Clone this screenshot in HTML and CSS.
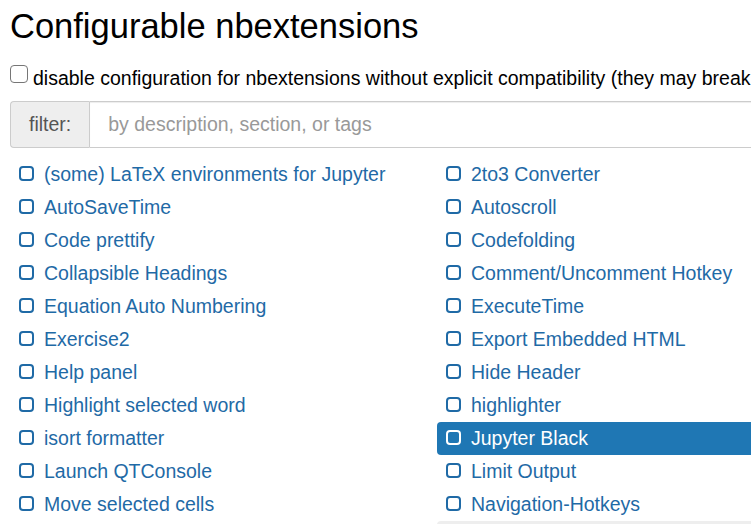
FILE: index.html
```html
<!DOCTYPE html>
<html lang="en">
<head>
<meta charset="utf-8">
<title>Configurable nbextensions</title>
<link rel="stylesheet" href="styles.css">
</head>
<body>
<div class="page">
  <h1 class="title">Configurable nbextensions</h1>
  <label class="compat"><input type="checkbox" class="compat-box">disable configuration for nbextensions without explicit compatibility (they may break</label>
  <div class="filter-group">
    <span class="filter-addon">filter:</span>
    <input class="filter-input" type="text" placeholder="by description, section, or tags">
  </div>
  <ul class="ext-list">
    <li class="ext"><span class="ext-box"></span><span class="ext-name">(some) LaTeX environments for Jupyter</span></li>
    <li class="ext"><span class="ext-box"></span><span class="ext-name">2to3 Converter</span></li>
    <li class="ext"><span class="ext-box"></span><span class="ext-name">AutoSaveTime</span></li>
    <li class="ext"><span class="ext-box"></span><span class="ext-name">Autoscroll</span></li>
    <li class="ext"><span class="ext-box"></span><span class="ext-name">Code prettify</span></li>
    <li class="ext"><span class="ext-box"></span><span class="ext-name">Codefolding</span></li>
    <li class="ext"><span class="ext-box"></span><span class="ext-name">Collapsible Headings</span></li>
    <li class="ext"><span class="ext-box"></span><span class="ext-name">Comment/Uncomment Hotkey</span></li>
    <li class="ext"><span class="ext-box"></span><span class="ext-name">Equation Auto Numbering</span></li>
    <li class="ext"><span class="ext-box"></span><span class="ext-name">ExecuteTime</span></li>
    <li class="ext"><span class="ext-box"></span><span class="ext-name">Exercise2</span></li>
    <li class="ext"><span class="ext-box"></span><span class="ext-name">Export Embedded HTML</span></li>
    <li class="ext"><span class="ext-box"></span><span class="ext-name">Help panel</span></li>
    <li class="ext"><span class="ext-box"></span><span class="ext-name">Hide Header</span></li>
    <li class="ext"><span class="ext-box"></span><span class="ext-name">Highlight selected word</span></li>
    <li class="ext"><span class="ext-box"></span><span class="ext-name">highlighter</span></li>
    <li class="ext"><span class="ext-box"></span><span class="ext-name">isort formatter</span></li>
    <li class="ext ext-active"><span class="ext-box"></span><span class="ext-name">Jupyter Black</span></li>
    <li class="ext"><span class="ext-box"></span><span class="ext-name">Launch QTConsole</span></li>
    <li class="ext"><span class="ext-box"></span><span class="ext-name">Limit Output</span></li>
    <li class="ext"><span class="ext-box"></span><span class="ext-name">Move selected cells</span></li>
    <li class="ext"><span class="ext-box"></span><span class="ext-name">Navigation-Hotkeys</span></li>
    <li class="ext ext-empty"></li>
    <li class="ext ext-empty ext-muted"></li>
  </ul>
</div>
</body>
</html>
```
FILE: styles.css
```css
html, body {
  margin: 0;
  padding: 0;
  overflow: hidden;
  background: #fff;
}
body {
  font-family: "Liberation Sans", Arial, sans-serif;
  color: #000;
}
.page {
  width: 854px;
  padding: 0 10px;
}
.title {
  margin: 8px 0 0;
  font-size: 34.5px;
  line-height: 1.1;
  font-weight: normal;
}
.compat {
  display: block;
  margin-top: 18px;
  font-size: 19.5px;
  line-height: 28px;
  white-space: nowrap;
}
.compat-box {
  -webkit-appearance: none;
  appearance: none;
  display: inline-block;
  width: 18px;
  height: 18px;
  margin: 0 5px 0 0;
  vertical-align: 2px;
  border: 1.5px solid #767676;
  border-radius: 4px;
  background: #fff;
  box-sizing: border-box;
}
.filter-group {
  display: flex;
  margin-top: 9px;
  height: 47px;
  font-size: 19.5px;
}
.filter-addon {
  display: flex;
  align-items: center;
  padding: 0 18px;
  background: #eee;
  color: #555;
  border: 1px solid #ccc;
  border-right: 0;
  border-radius: 4px 0 0 4px;
}
.filter-input {
  flex: 1;
  box-sizing: border-box;
  height: 47px;
  margin: 0;
  padding: 0 18px;
  font: inherit;
  color: #555;
  border: 1px solid #ccc;
  border-radius: 0 4px 4px 0;
  outline: none;
  box-shadow: inset 0 1px 1px rgba(0,0,0,0.075);
}
.filter-input::placeholder {
  color: #999;
}
.ext-list {
  list-style: none;
  margin: 10px 0 0;
  padding: 0;
  display: grid;
  grid-template-columns: 427px 427px;
}
.ext {
  display: flex;
  align-items: center;
  height: 33px;
  padding-left: 9px;
  font-size: 19.5px;
  color: #1f6aa6;
  border-radius: 4px;
  white-space: nowrap;
}
.ext-box {
  box-sizing: border-box;
  width: 15px;
  height: 15px;
  margin-right: 10px;
  margin-top: -1px;
  border: 2px solid currentColor;
  border-radius: 4px;
  flex: none;
}
.ext-active {
  background: #1f77b4;
  color: #fff;
}
.ext-muted {
  background: #eee;
}
```
